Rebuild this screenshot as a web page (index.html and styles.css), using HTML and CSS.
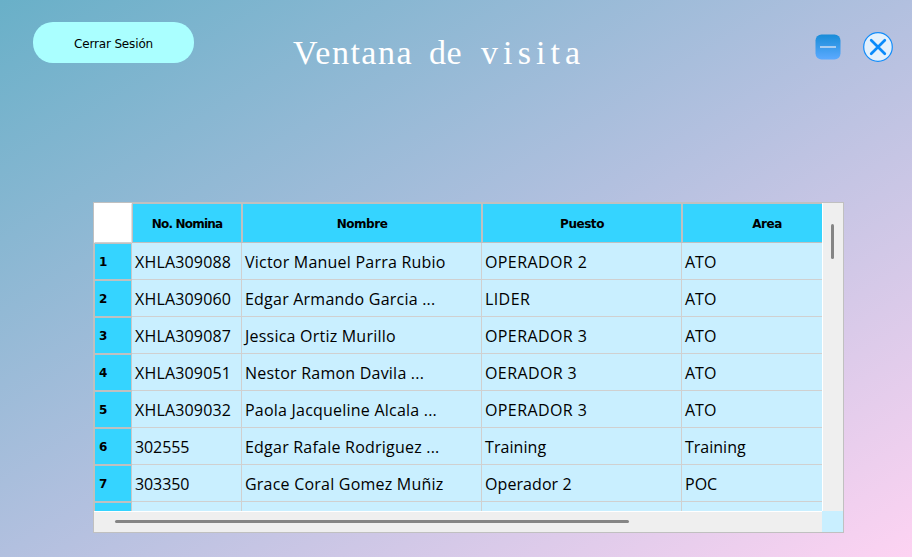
FILE: index.html
```
<!DOCTYPE html>
<html lang="es">
<head>
<meta charset="utf-8">
<title>Ventana de visita</title>
<link rel="stylesheet" href="styles.css">
</head>
<body>
<header class="top">
  <button class="logout">Cerrar Sesión</button>
  <h1 class="title"><span class="w1">Ventana</span> <span class="w2">de</span> <span class="w3">visita</span></h1>
  <div class="controls">
    <svg width="26" height="26" viewBox="0 0 26 26"><defs><linearGradient id="g" x1="0" y1="0" x2="0" y2="1"><stop offset="0" stop-color="#188cd8"/><stop offset="1" stop-color="#5caaff"/></linearGradient></defs><rect x=".5" y=".5" width="25" height="25" rx="6" fill="url(#g)"/><path d="M5 13h16" stroke="#a9cdf0" stroke-width="2"/></svg>
    <svg width="30" height="30" viewBox="0 0 30 30"><circle cx="15" cy="15" r="14.3" fill="#e3f1fd" stroke="#138dfa" stroke-width="1.2"/><path d="M8.2 8.2l13.6 13.6M21.8 8.2L8.2 21.8" stroke="#0a8bfa" stroke-width="2.7" stroke-linecap="round"/></svg>
  </div>
</header>
<main class="frame">
  <div class="view">
    <div class="row head"><div class="corner"></div><div class="c1"><span class="h1">No. Nomina</span></div><div class="c2"><span class="h2">Nombre</span></div><div class="c3"><span class="h3">Puesto</span></div><div class="c4"><span class="h4">Area</span></div></div>
    <div class="row"><div class="num">1</div><div class="c1">XHLA309088</div><div class="c2">Victor Manuel Parra Rubio</div><div class="c3">OPERADOR 2</div><div class="c4">ATO</div></div>
    <div class="row"><div class="num">2</div><div class="c1">XHLA309060</div><div class="c2">Edgar Armando Garcia ...</div><div class="c3">LIDER</div><div class="c4">ATO</div></div>
    <div class="row"><div class="num">3</div><div class="c1">XHLA309087</div><div class="c2">Jessica Ortiz Murillo</div><div class="c3">OPERADOR 3</div><div class="c4">ATO</div></div>
    <div class="row"><div class="num">4</div><div class="c1">XHLA309051</div><div class="c2">Nestor Ramon Davila ...</div><div class="c3">OERADOR 3</div><div class="c4">ATO</div></div>
    <div class="row"><div class="num">5</div><div class="c1">XHLA309032</div><div class="c2">Paola Jacqueline Alcala ...</div><div class="c3">OPERADOR 3</div><div class="c4">ATO</div></div>
    <div class="row"><div class="num">6</div><div class="c1 digits">302555</div><div class="c2">Edgar Rafale Rodriguez ...</div><div class="c3 mixed">Training</div><div class="c4">Training</div></div>
    <div class="row"><div class="num">7</div><div class="c1 digits">303350</div><div class="c2">Grace Coral Gomez Muñiz</div><div class="c3 mixed">Operador 2</div><div class="c4">POC</div></div>
    <div class="row"><div class="num"></div><div class="c1"></div><div class="c2"></div><div class="c3"></div><div class="c4"></div></div>
  </div>
  <div class="vbar"><div class="vthumb"></div></div>
  <div class="hbar"><div class="hthumb"></div></div>
  <div class="bend"></div>
</main>
</body>
</html>
```
FILE: styles.css
```
* { box-sizing: border-box; }
body {
  margin: 0;
  width: 912px;
  height: 557px;
  overflow: hidden;
  background: linear-gradient(to bottom right, #69b0c8, #b2c0df 50%, #fdd3f2);
  font-family: "Open Sans", "Noto Sans", sans-serif;
}
.top { display: flex; height: 202px; padding: 22px 19px 0 33px; align-items: flex-start; }
.logout {
  width: 161px; height: 41px; padding: 2px 0 0; border: 0; border-radius: 20px;
  background: #aaffff; color: #000;
  font: 12px "DejaVu Sans", sans-serif; letter-spacing: -0.15px;
}
.title {
  display: flex; margin: 11px 0 0 99px; width: 500px;
  color: #fff; font: 400 34px/40px "Liberation Serif", serif;
}
.w1 { width: 136px; letter-spacing: 1.5px; }
.w2 { width: 52px; letter-spacing: 0.5px; }
.w3 { letter-spacing: 5.1px; }
.controls { display: flex; align-items: center; gap: 22px; margin: 10px 0 0 auto; }
.controls svg { display: block; flex: none; }
.frame {
  display: grid; grid-template: 308px 21px / 728px 21px;
  width: 751px; height: 331px; margin-left: 93px;
  border: 1px solid #c0c0c0; background: #c9efff;
}
.view { overflow: hidden; }
.row {
  display: grid; grid-template-columns: 38px 110px 240px 200px 170px;
  height: 37px; font-size: 16px; line-height: 38px; white-space: nowrap;
}
.row > div { height: 37px; border: solid #d0d0d0; border-width: 0 1px 1px 0; padding-left: 3px; }
.row .c1 { letter-spacing: 0.17px; }
.row .c1.digits { letter-spacing: -0.1px; }
.row .c2 { letter-spacing: 0.22px; }
.row .c3 { letter-spacing: 0.4px; }
.row .c3.mixed { letter-spacing: 0.08px; }
.row .num {
  border: solid #c0c0c0; border-width: 1px; background: #35d4ff;
  border-right-color: #c8c8c8; padding-left: 4px;
  font: bold 12px/36px "DejaVu Sans", sans-serif;
}
.head { height: 40px; }
.row.head > div {
  height: 40px; border: 1px solid #c0c0c0; padding: 0;
  background: #35d4ff; text-align: center;
  font: bold 12px/40px "DejaVu Sans", sans-serif;
}
.row.head .corner { background: #fff; border-color: #fff #e0e0e0 #d0d0d0 #fff; }
.row .h1 { letter-spacing: -0.8px; }
.row .h2, .row .h3, .row .h4 { letter-spacing: -0.45px; }
.vbar { background: #efefef; border-left: 1px solid #fff; padding: 21px 0 0 8px; }
.vthumb { width: 3px; height: 35px; border-radius: 2px; background: #858585; }
.hbar { background: #efefef; border-top: 1px solid #fff; padding: 8px 0 0 21px; }
.hthumb { width: 514px; height: 3px; border-radius: 2px; background: #858585; }
```
